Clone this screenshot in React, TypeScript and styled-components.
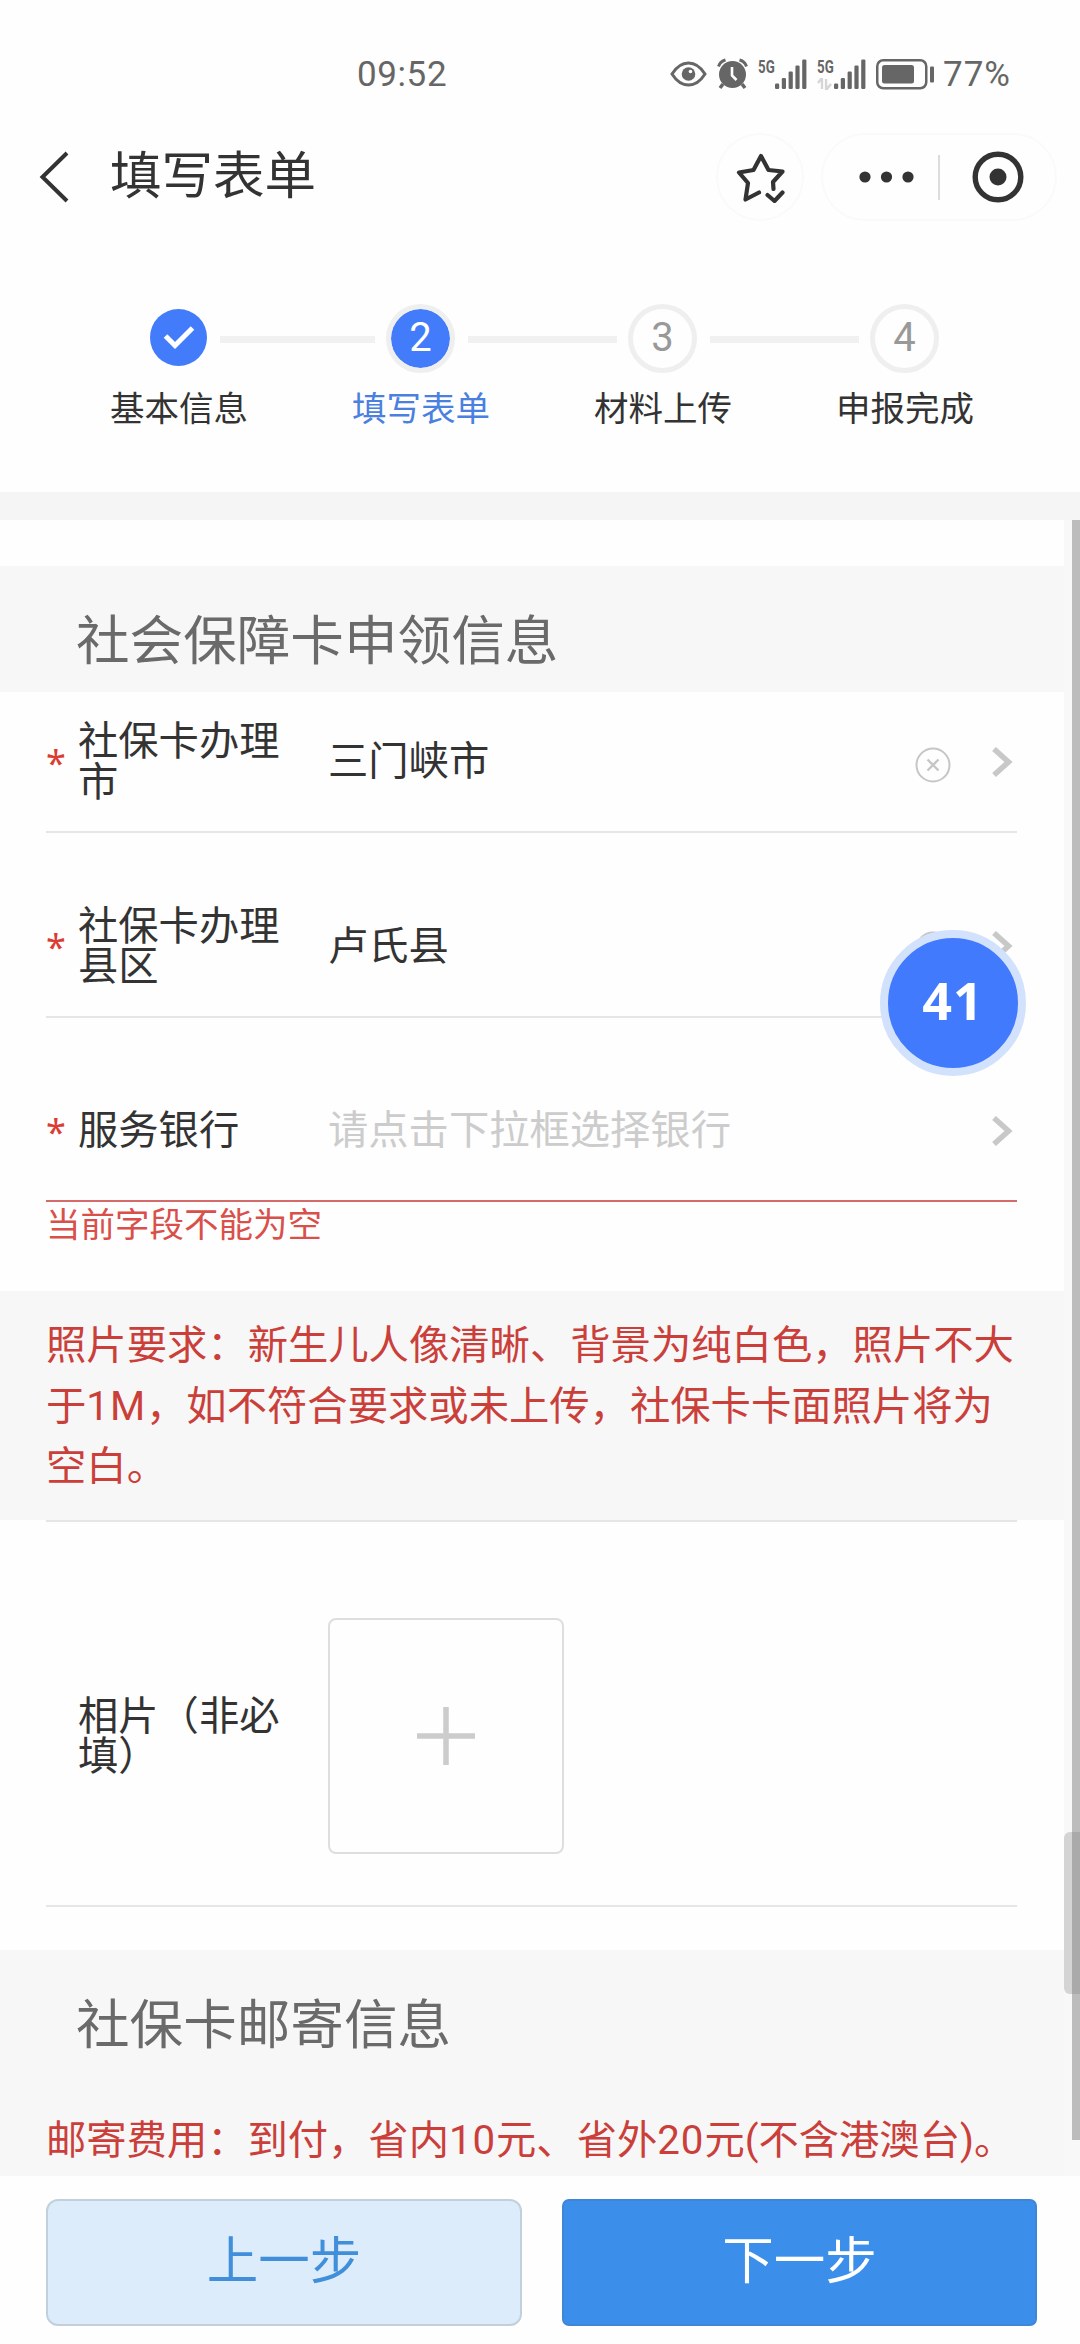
import React from "react";
import styled, { createGlobalStyle } from "styled-components";

const GlobalStyle = createGlobalStyle`
  * { box-sizing: border-box; }
  html, body { margin: 0; padding: 0; background: #fefefe; }
  body { font-family: Roboto, "Noto Sans CJK SC", sans-serif; color: #333; }
  button { font-family: inherit; margin: 0; padding: 0; border: 0; background: none; }
`;

const Screen = styled.div`
  width: 1080px;
  height: 2344px;
  display: flex;
  flex-direction: column;
  background: #fefefe;
  overflow: hidden;
`;

const StatusBar = styled.header`
  height: 122px;
  padding: 26px 69px 0 357px;
  display: flex;
  align-items: center;
  justify-content: space-between;
  color: #666;
  font-size: 35px;
  line-height: 40px;
`;

const Clock = styled.span`
  letter-spacing: 0.6px;
  padding-top: 2px;
`;

const StatusIcons = styled.div`
  display: flex;
  align-items: center;
`;

const Percent = styled.span`
  width: 68px;
  margin-left: 8px;
  padding-top: 2px;
  letter-spacing: 1px;
  white-space: nowrap;
`;

const NavBar = styled.nav`
  height: 110px;
  padding: 0 23px 0 38px;
  display: flex;
  align-items: center;
`;

const PageTitle = styled.h1`
  margin: 0 0 0 40px;
  flex: 1;
  font-size: 51.5px;
  line-height: 60px;
  font-weight: 400;
`;

const RoundButton = styled.button`
  width: 88px;
  height: 88px;
  border: 2px solid #fafafa;
  border-radius: 44px;
  display: flex;
  align-items: center;
  justify-content: center;
`;

const Capsule = styled.div`
  width: 236px;
  height: 88px;
  margin-left: 17px;
  border: 2px solid #fafafa;
  border-radius: 44px;
  display: grid;
  grid-template-columns: 115px 2px 1fr;
  align-items: center;
  justify-items: center;
`;

const CapsuleRule = styled.span`
  width: 2px;
  height: 45px;
  background: #dcdcdc;
`;

const Steps = styled.ol`
  list-style: none;
  margin: 0;
  height: 260px;
  padding: 71px 54px 0 58px;
  display: grid;
  grid-template-columns: repeat(4, 242px);
`;

const Step = styled.li`
  display: flex;
  flex-direction: column;
  align-items: center;
  gap: 15px;
`;

const StepTrack = styled.div`
  width: 100%;
  height: 70px;
  display: grid;
  grid-template-columns: 1fr 70px 1fr;
  align-items: center;
`;

const StepLine = styled.span<{ $side: "before" | "after"; $drawn: boolean; $inset: number }>`
  height: 7px;
  margin-top: 2px;
  background: ${(p) => (p.$drawn ? "#f1f1f1" : "transparent")};
  margin-left: ${(p) => (p.$side === "after" ? p.$inset : 0)}px;
  margin-right: ${(p) => (p.$side === "before" ? p.$inset : 0)}px;
`;

type StepState = "done" | "active" | "todo";

const StepDot = styled.span<{ $state: StepState }>`
  width: ${(p) => (p.$state === "done" ? 57 : 69)}px;
  height: ${(p) => (p.$state === "done" ? 57 : 69)}px;
  margin: ${(p) => (p.$state === "done" ? "0 1px 2px 0" : "0 1px 0 0")};
  border: ${(p) => (p.$state === "done" ? "0" : "5px solid #efefef")};
  border-radius: 50%;
  justify-self: center;
  display: flex;
  align-items: center;
  justify-content: center;
  background: ${(p) => (p.$state === "todo" ? "#fefefe" : "#427cfb")};
  background-clip: padding-box;
  color: ${(p) => (p.$state === "todo" ? "#999" : "#fff")};
  font-size: 40px;
  line-height: 48px;
  padding-bottom: 1px;
`;

const StepLabel = styled.span<{ $active: boolean }>`
  font-size: 34.5px;
  line-height: 42px;
  color: ${(p) => (p.$active ? "#4a80e0" : "#333")};
`;

const Band = styled.div`
  height: 28px;
  background: #f5f5f5;
`;

const ScrollArea = styled.main`
  height: 1656px;
  position: relative;
  display: flex;
  background: #f8f8f8;
`;

const Form = styled.div`
  width: 1064px;
  background: #fefefe;
`;

const TopSpacer = styled.div`
  height: 46px;
`;

const SectionTitle = styled.h2`
  margin: 0;
  height: 126px;
  padding: 26px 76px 0;
  display: flex;
  align-items: center;
  background: #f7f7f7;
  color: #6a6a6a;
  font-size: 53.6px;
  line-height: 64px;
  font-weight: 400;
`;

const Row = styled.div<{ $gap?: number; $error?: boolean }>`
  height: 141px;
  margin: ${(p) => p.$gap ?? 0}px 46px 0;
  border-bottom: 2px solid ${(p) => (p.$error ? "#d56a6a" : "#e6e6e6")};
  display: grid;
  grid-template-columns: 32px 250px 1fr auto;
  align-items: center;
  width: 971px;
  font-size: 40.3px;
  line-height: 40.3px;
`;

const Required = styled.span`
  color: #dc3c32;
  font-family: "Noto Sans", sans-serif;
  font-size: 36px;
  padding-top: 3px;
`;

const FieldLabel = styled.label`
  width: 215px;
  padding-top: 2px;
`;

const FieldValue = styled.span<{ $placeholder?: boolean }>`
  padding-top: 2px;
  color: ${(p) => (p.$placeholder ? "#ccc" : "#333")};
`;

const RowActions = styled.div`
  display: flex;
  align-items: center;
  gap: 41px;
  padding-right: 4px;
`;

const ErrorText = styled.p`
  margin: 0;
  height: 89px;
  padding: 0 46px;
  font-size: 34.5px;
  line-height: 46px;
  color: #d9504b;
`;

const Notice = styled.p`
  margin: 0;
  height: 229px;
  padding: 25px 46px 0;
  background: #f7f7f7;
  color: #cb3f3b;
  font-size: 40.35px;
  line-height: 60.7px;
`;

const NoticeLine = styled.span`
  display: block;
  white-space: nowrap;
`;

const Latin = styled.span`
  letter-spacing: 0.9px;
`;

const PhotoRow = styled(Row)`
  height: 387px;
  margin-top: 0;
  border-top: 2px solid #e6e6e6;
  padding-top: 45px;
`;

const UploadBox = styled.button`
  width: 236px;
  height: 236px;
  border: 2px solid #dedede;
  border-radius: 8px;
  display: flex;
  align-items: center;
  justify-content: center;
`;

const Gap = styled.div`
  height: 43px;
`;

const Postage = styled.p`
  margin: 0;
  padding: 35px 46px 0;
  height: 100px;
  background: #f7f7f7;
  color: #cb3f3b;
  font-size: 40.3px;
  line-height: 60px;
  white-space: nowrap;
`;

const Gutter = styled.div`
  width: 16px;
  display: flex;
  justify-content: flex-end;
`;

const GutterTrack = styled.div`
  width: 8px;
  height: 1620px;
  background: #bcbcbc;
`;

const Thumb = styled.div`
  position: absolute;
  right: 0;
  top: 1312px;
  width: 16px;
  height: 162px;
  border-radius: 6px 0 0 6px;
  background: rgba(130, 130, 130, 0.3);
`;

const FloatBall = styled.button`
  position: absolute;
  left: 880px;
  top: 410px;
  width: 146px;
  height: 146px;
  border: 8px solid #d3e2fc;
  border-radius: 50%;
  background: #427afe;
  color: #fff;
  font-family: "Open Sans", "Noto Sans", sans-serif;
  font-weight: 700;
  font-size: 52px;
  line-height: 60px;
  letter-spacing: 1px;
  padding-bottom: 6px;
`;

const Footer = styled.footer`
  flex: 1;
  padding: 23px 43px 18px 46px;
  display: grid;
  grid-template-columns: 476px 475px;
  justify-content: space-between;
`;

const FooterButton = styled.button<{ $primary?: boolean }>`
  height: 127px;
  border: 2px solid ${(p) => (p.$primary ? "#3f86d6" : "#c2d0dc")};
  border-radius: ${(p) => (p.$primary ? 7 : 12)}px;
  background: ${(p) => (p.$primary ? "#3b8fea" : "#dcecfa")};
  color: ${(p) => (p.$primary ? "#fff" : "#418edb")};
  font-size: 51.5px;
  line-height: 60px;
  padding-bottom: 2px;
`;

function EyeIcon() {
  return (
    <svg width="37" height="30" viewBox="0 0 37 30">
      <path d="M2 15C8 5.500 14 4 18.500 4S29 5.500 35 15C29 24.500 23 26 18.500 26S8 24.500 2 15Z" fill="none" stroke="#666" strokeWidth="3" />
      <circle cx="18.500" cy="15" r="6.800" fill="#666" />
      <circle cx="20.500" cy="12.500" r="1.800" fill="#fff" />
    </svg>
  );
}

const AlarmSvg = styled.svg`
  margin-left: 10px;
`;

function AlarmIcon() {
  return (
    <AlarmSvg width="31" height="32" viewBox="0 0 31 32">
      <circle cx="15.500" cy="16.500" r="13.500" fill="#666" />
      <path d="M1.500 8.500Q3 3.500 8.500 2M29.500 8.500Q28 3.500 22.500 2" fill="none" stroke="#666" strokeWidth="3" />
      <path d="M6 26L3 30M25 26L28 30" stroke="#666" strokeWidth="3.500" />
      <path d="M15 9V17.500L19.500 22" fill="none" stroke="#fff" strokeWidth="2.600" />
    </AlarmSvg>
  );
}

const Signal = styled.div<{ $before: number }>`
  margin-left: ${(p) => p.$before}px;
  display: grid;
  grid-template-columns: 17px 32px;
  height: 31px;
`;

const Network = styled.span`
  display: flex;
  flex-direction: column;
  justify-content: space-between;
  font-size: 19px;
  line-height: 15px;
  font-weight: 700;
  transform: scaleX(0.7);
  transform-origin: left top;
`;

function SignalIcon({ before, data }: { before: number; data?: boolean }) {
  return (
    <Signal $before={before}>
      <Network>
        5G
        {data && (
          <svg width="22" height="12" viewBox="0 0 17 12" preserveAspectRatio="none">
            <path d="M1 5L5.500 0V11M10 1V12L15.500 6" fill="none" stroke="#d6d6d6" strokeWidth="2.600" />
          </svg>
        )}
      </Network>
      <svg width="32" height="31" viewBox="0 0 32 31">
        {[5.5, 11, 17.5, 23.5, 29.5].map((h, i) => (
          <rect key={h} x={i * 6.8} y={30 - h} width="4.200" height={h} rx="1.200" fill="#666" />
        ))}
      </svg>
    </Signal>
  );
}

const BatterySvg = styled.svg`
  margin-left: 10px;
`;

function BatteryIcon() {
  return (
    <BatterySvg width="59" height="31" viewBox="0 0 59 31">
      <rect x="1.250" y="1.250" width="49" height="28" rx="6" fill="none" stroke="#666" strokeWidth="2.500" />
      <rect x="6" y="6" width="32" height="18.500" rx="2.500" fill="#666" />
      <rect x="54" y="7.500" width="4" height="16" rx="1" fill="#666" />
    </BatterySvg>
  );
}

function ChevronRight() {
  return (
    <svg width="21" height="30" viewBox="0 0 21 30">
      <path d="M2 2L16.500 15L2 28" fill="none" stroke="#c8c8c8" strokeWidth="5.500" />
    </svg>
  );
}

const ClearSvg = styled.svg`
  margin-top: 6px;
`;

function ClearIcon() {
  return (
    <ClearSvg width="36" height="36" viewBox="0 0 36 36">
      <circle cx="18" cy="18" r="16.500" fill="none" stroke="#c6c6c6" strokeWidth="2" />
      <path d="M12.500 12.500L23.500 23.500M23.500 12.500L12.500 23.500" stroke="#c6c6c6" strokeWidth="2.400" />
    </ClearSvg>
  );
}

const MoreDots = styled.svg`
  margin-left: 13px;
`;

const STEPS: { label: string; state: StepState }[] = [
  { label: "基本信息", state: "done" },
  { label: "填写表单", state: "active" },
  { label: "材料上传", state: "todo" },
  { label: "申报完成", state: "todo" },
];

const FIELDS = [
  { label: "社保卡办理市", value: "三门峡市", clear: true, gap: 0 },
  { label: "社保卡办理县区", value: "卢氏县", clear: true, gap: 43.5 },
  { label: "服务银行", placeholder: "请点击下拉框选择银行", error: true, gap: 43.5 },
];

export default function App() {
  return (
    <Screen>
      <GlobalStyle />
      <StatusBar>
        <Clock>09:52</Clock>
        <StatusIcons>
          <EyeIcon />
          <AlarmIcon />
          <SignalIcon before={10} />
          <SignalIcon before={10} data />
          <BatteryIcon />
          <Percent>77%</Percent>
        </StatusIcons>
      </StatusBar>

      <NavBar>
        <svg width="32" height="52" viewBox="0 0 32 52">
          <path d="M29 2L4.500 26L29 50" fill="none" stroke="#333" strokeWidth="4" />
        </svg>
        <PageTitle>填写表单</PageTitle>
        <RoundButton aria-label="收藏">
          <svg width="50" height="52" viewBox="0 0 50 52" fill="none" stroke="#333" strokeWidth="4.200" strokeLinejoin="round" strokeLinecap="round">
            <path d="M24 41.500L10.500 48.500L13 32L4 21.500L18.500 19L26 5L33.500 19L47.500 20.500L38 31L38.500 38" />
            <path d="M32.500 44L39.500 50L47.500 41.500" />
          </svg>
        </RoundButton>
        <Capsule>
          <MoreDots width="56" height="12" viewBox="0 0 56 12">
            {[6, 27.5, 49].map((x) => (
              <circle key={x} cx={x} cy="6" r="5.600" fill="#333" />
            ))}
          </MoreDots>
          <CapsuleRule />
          <svg width="52" height="52" viewBox="0 0 52 52">
            <circle cx="26" cy="26" r="22.800" fill="none" stroke="#333" strokeWidth="5.400" />
            <circle cx="26" cy="26" r="8.500" fill="#333" />
          </svg>
        </Capsule>
      </NavBar>

      <Steps>
        {STEPS.map((s, i) => (
          <Step key={s.label}>
            <StepTrack>
              <StepLine $side="before" $drawn={i > 0} $inset={11} />
              <StepDot $state={s.state}>
                {s.state === "done" ? (
                  <svg width="32" height="26" viewBox="0 0 32 26">
                    <path d="M2.500 12L12 21.500L29.500 4" fill="none" stroke="#fff" strokeWidth="5" />
                  </svg>
                ) : (
                  i + 1
                )}
              </StepDot>
              <StepLine $side="after" $drawn={i < 3} $inset={i === 0 ? 6 : 12} />
            </StepTrack>
            <StepLabel $active={s.state === "active"}>{s.label}</StepLabel>
          </Step>
        ))}
      </Steps>
      <Band />

      <ScrollArea>
        <Form>
          <TopSpacer />
          <SectionTitle>社会保障卡申领信息</SectionTitle>
          {FIELDS.map((f) => (
            <Row key={f.label} $gap={f.gap} $error={f.error}>
              <Required>*</Required>
              <FieldLabel>{f.label}</FieldLabel>
              <FieldValue $placeholder={!f.value}>{f.value ?? f.placeholder}</FieldValue>
              <RowActions>
                {f.clear && <ClearIcon />}
                <ChevronRight />
              </RowActions>
            </Row>
          ))}
          <ErrorText>当前字段不能为空</ErrorText>
          <Notice>
            <NoticeLine>照片要求：新生儿人像清晰、背景为纯白色，照片不大</NoticeLine>
            <NoticeLine>
              于<Latin>1M</Latin>，如不符合要求或未上传，社保卡卡面照片将为
            </NoticeLine>
            <NoticeLine>空白。</NoticeLine>
          </Notice>
          <PhotoRow>
            <span />
            <FieldLabel>相片（非必填）</FieldLabel>
            <UploadBox aria-label="上传">
              <svg width="58" height="58" viewBox="0 0 58 58">
                <path d="M29 0V58M0 29H58" stroke="#ccc" strokeWidth="5.500" />
              </svg>
            </UploadBox>
          </PhotoRow>
          <Gap />
          <SectionTitle>社保卡邮寄信息</SectionTitle>
          <Postage>
            邮寄费用：到付，省内<Latin>10</Latin>元、省外<Latin>20</Latin>元(不含港澳台)。
          </Postage>
        </Form>
        <Gutter>
          <GutterTrack />
        </Gutter>
        <Thumb />
        <FloatBall>41</FloatBall>
      </ScrollArea>

      <Footer>
        <FooterButton>上一步</FooterButton>
        <FooterButton $primary>下一步</FooterButton>
      </Footer>
    </Screen>
  );
}
